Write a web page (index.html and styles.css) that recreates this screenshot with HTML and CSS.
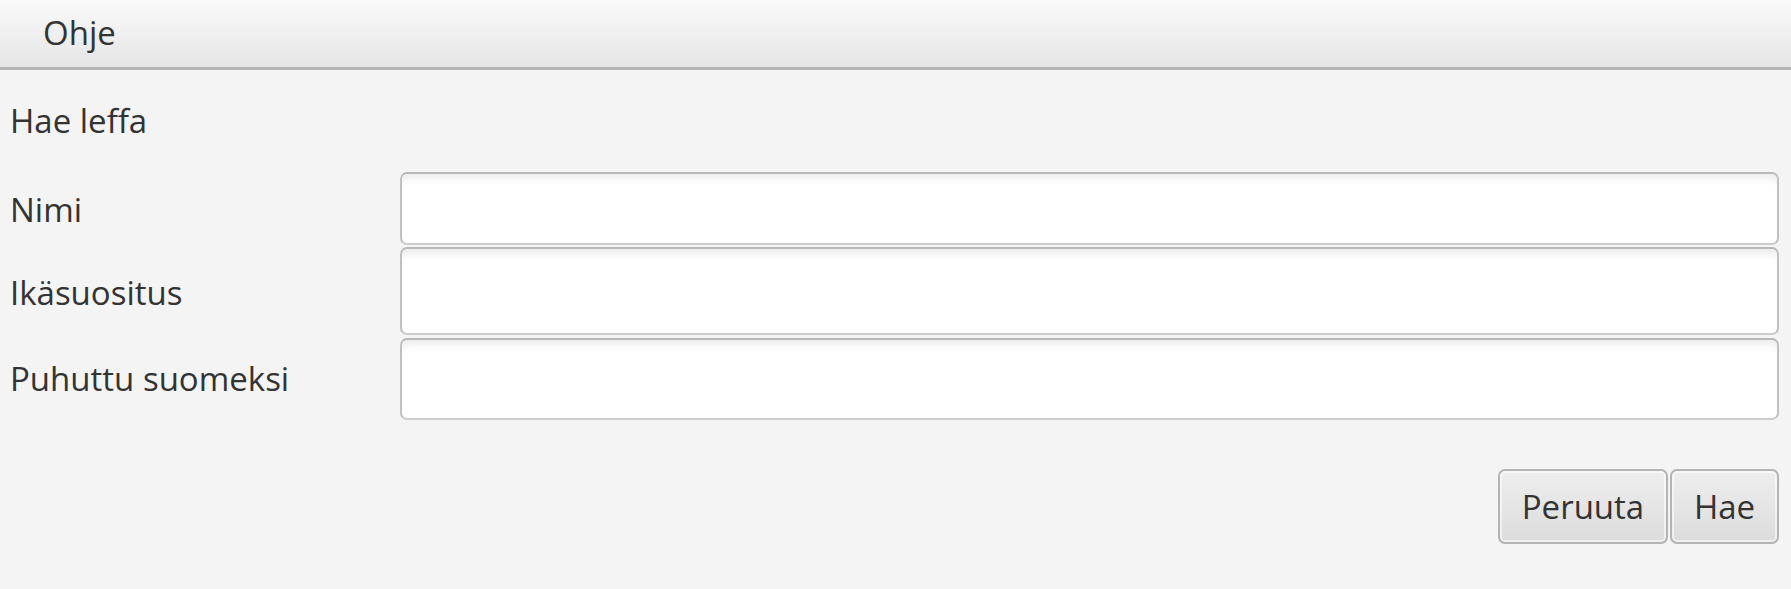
FILE: index.html
```html
<!DOCTYPE html>
<html lang="fi">
<head>
<meta charset="utf-8">
<title>Hae leffa</title>
<link rel="stylesheet" href="styles.css">
</head>
<body>
<div class="menubar">
  <span class="menu">Ohje</span>
</div>
<main class="content">
  <div class="title">Hae leffa</div>
  <div class="form">
    <label class="label row1">Nimi</label>
    <input class="field row1" type="text">
    <label class="label row2">Ikäsuositus</label>
    <input class="field row2" type="text">
    <label class="label row3">Puhuttu suomeksi</label>
    <input class="field row3" type="text">
  </div>
  <div class="actions">
    <button class="btn btn-cancel">Peruuta</button>
    <button class="btn btn-search">Hae</button>
  </div>
</main>
</body>
</html>
```
FILE: styles.css
```css
html, body {
  margin: 0;
  padding: 0;
  background: #f4f4f4;
}
body {
  font-family: "Open Sans", "Noto Sans", sans-serif;
  font-size: 33px;
  color: #333333;
  width: 1791px;
  height: 589px;
  overflow: hidden;
}
.menubar {
  height: 67px;
  border-bottom: 3px solid #b4b4b4;
  background: linear-gradient(#fafafa, #e5e5e5);
  display: flex;
  align-items: center;
  padding-left: 43px;
  box-sizing: content-box;
}
.menu {
  line-height: 40px;
  margin-top: -2px;
}
.content {
  padding: 0 12px 0 10px;
}
.title {
  line-height: 40px;
  margin-top: 31px;
}
.form {
  display: grid;
  grid-template-columns: 390px 1fr;
  margin-top: 31px;
}
.label {
  display: flex;
  align-items: center;
  line-height: 40px;
}
.field {
  margin: 0;
  box-sizing: border-box;
  width: 100%;
  background: #ffffff;
  border: 2px solid #c0c0c0;
  border-top-color: #b8b8b8;
  border-bottom-color: #cdcdcd;
  border-radius: 7px;
  box-shadow: inset 0 10px 8px -6px rgba(0, 0, 0, 0.09);
  font: inherit;
  outline: none;
  padding: 0 10px;
}
.field.row1 { height: 73px; margin-bottom: 2px; }
.field.row2 { height: 88px; margin-bottom: 3px; }
.field.row3 { height: 82px; }
.actions {
  display: flex;
  justify-content: flex-end;
  gap: 2px;
  margin-top: 49px;
}
.btn {
  box-sizing: border-box;
  height: 75px;
  font: inherit;
  color: #333333;
  background: linear-gradient(#eeeeee, #dcdcdc);
  border: 2px solid #b4b4b4;
  border-radius: 7px;
  box-shadow: inset 0 0 0 2px rgba(255, 255, 255, 0.55);
  padding: 0;
}
.btn-cancel { width: 170px; }
.btn-search { width: 109px; }
```
